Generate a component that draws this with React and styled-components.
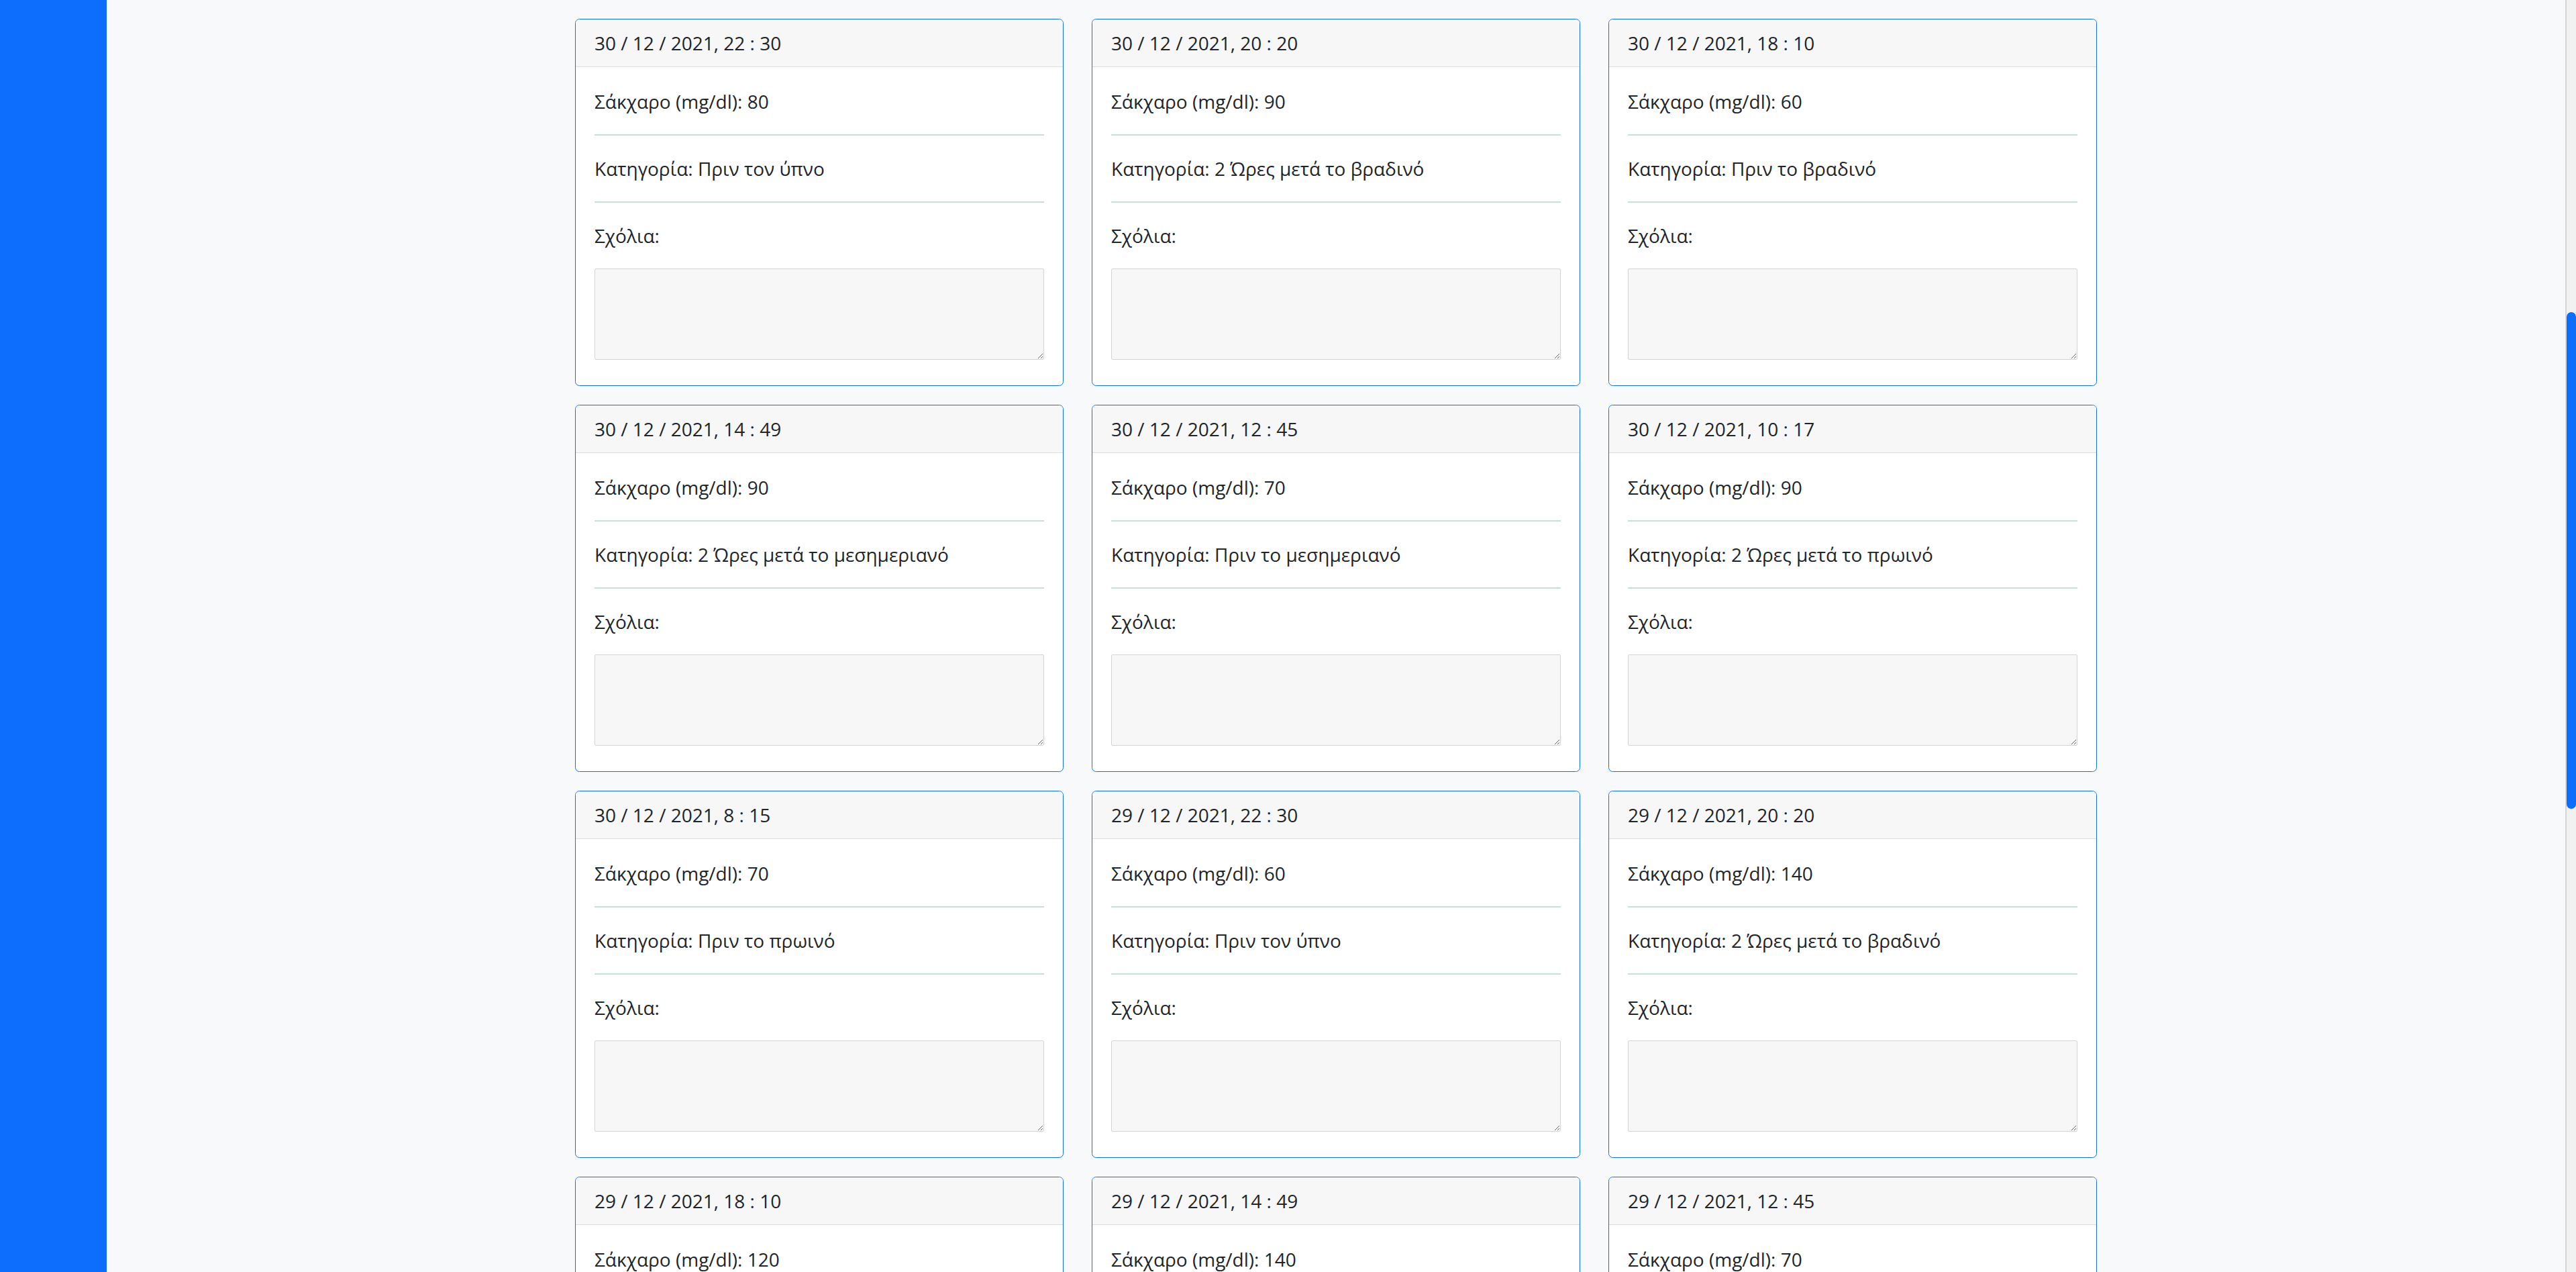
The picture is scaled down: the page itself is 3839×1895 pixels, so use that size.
import React from 'react';
import styled, { createGlobalStyle } from 'styled-components';

const entries = [
  { date: '30 / 12 / 2021, 22 : 30', sugar: 80, category: 'Πριν τον ύπνο' },
  { date: '30 / 12 / 2021, 20 : 20', sugar: 90, category: '2 Ώρες μετά το βραδινό' },
  { date: '30 / 12 / 2021, 18 : 10', sugar: 60, category: 'Πριν το βραδινό' },
  { date: '30 / 12 / 2021, 14 : 49', sugar: 90, category: '2 Ώρες μετά το μεσημεριανό' },
  { date: '30 / 12 / 2021, 12 : 45', sugar: 70, category: 'Πριν το μεσημεριανό' },
  { date: '30 / 12 / 2021, 10 : 17', sugar: 90, category: '2 Ώρες μετά το πρωινό' },
  { date: '30 / 12 / 2021, 8 : 15', sugar: 70, category: 'Πριν το πρωινό' },
  { date: '29 / 12 / 2021, 22 : 30', sugar: 60, category: 'Πριν τον ύπνο' },
  { date: '29 / 12 / 2021, 20 : 20', sugar: 140, category: '2 Ώρες μετά το βραδινό' },
  { date: '29 / 12 / 2021, 18 : 10', sugar: 120, category: 'Πριν το βραδινό' },
  { date: '29 / 12 / 2021, 14 : 49', sugar: 140, category: '2 Ώρες μετά το μεσημεριανό' },
  { date: '29 / 12 / 2021, 12 : 45', sugar: 70, category: 'Πριν το μεσημεριανό' },
];

const GlobalStyle = createGlobalStyle`
  html, body {
    margin: 0;
    padding: 0;
    overflow: hidden;
  }
  body {
    font-family: "Segoe UI", "Open Sans", "Noto Sans", sans-serif;
    font-size: 28px;
    line-height: 1.5;
    color: #212529;
    background: #f8f9fa;
  }
  * {
    box-sizing: border-box;
  }
`;

function Card({ entry }) {
  return (
    <CardBox>
      <CardHeader>{entry.date}</CardHeader>
      <CardBody>
        <Field>Σάκχαρο (mg/dl): {entry.sugar}</Field>
        <Divider />
        <Field>Κατηγορία: {entry.category}</Field>
        <Divider />
        <Field>Σχόλια:</Field>
        <Comments />
      </CardBody>
    </CardBox>
  );
}

function App() {
  return (
    <Layout>
      <GlobalStyle />
      <Sidebar />
      <Main>
        <Container>
          {entries.map((e) => (
            <Card key={e.date} entry={e} />
          ))}
        </Container>
      </Main>
      <ScrollTrack>
        <ScrollThumb />
      </ScrollTrack>
    </Layout>
  );
}

const Layout = styled.div`
  display: flex;
  height: 1895px;
  overflow: hidden;
`;

const Sidebar = styled.nav`
  flex: 0 0 159px;
  background-color: #0d6efd;
`;

const Main = styled.main`
  flex: 1;
  overflow: hidden;
  background-color: #f8f9fa;
`;

const Container = styled.div`
  width: 2268px;
  margin: 0 auto;
  padding-top: 28px;
  display: grid;
  grid-template-columns: repeat(3, 1fr);
  column-gap: 42px;
  row-gap: 28px;
`;

const CardBox = styled.div`
  display: flex;
  flex-direction: column;
  background-color: #fff;
  border: 1px solid #0d6efd;
  border-radius: 6.5px;
  overflow: hidden;
`;

const CardHeader = styled.div`
  padding: 14px 28px;
  background-color: #f7f7f7;
  border-bottom: 1px solid #dcdcdc;
  line-height: 42px;
`;

const CardBody = styled.div`
  padding: 30px 28px 28px;
  display: flex;
  flex-direction: column;
`;

const Field = styled.p`
  margin: 0 0 28px;
  line-height: 42px;
`;

const Divider = styled.hr`
  margin: 0 0 28px;
  border: 0;
  height: 2px;
  background-color: #c6e0d9;
`;

const Comments = styled.textarea`
  display: block;
  width: 100%;
  height: 136px;
  margin: 0 0 10px;
  background-color: #f7f7f7;
  border: 1px solid #d4d4d4;
  border-radius: 2px;
  font: inherit;
  resize: vertical;
`;

const ScrollTrack = styled.div`
  flex: 0 0 16px;
  display: flex;
  flex-direction: column;
  padding-top: 465px;
  background-color: #f1f1f1;
  border-left: 2px solid #d6d6d6;
`;

const ScrollThumb = styled.div`
  height: 740px;
  border-radius: 7px;
  background-color: #0d6efd;
`;

export default App;
